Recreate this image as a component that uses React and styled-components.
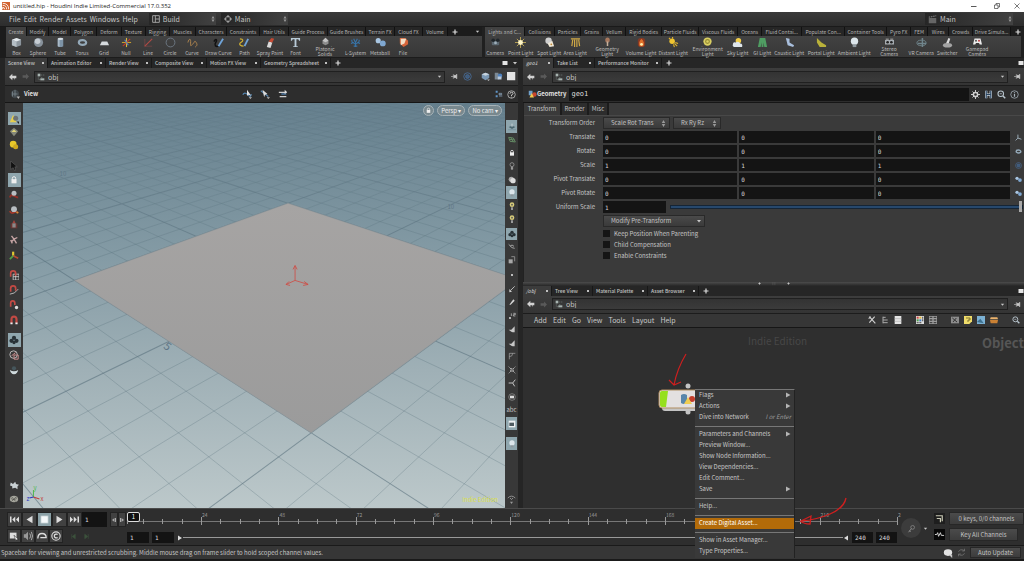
import React, { useState } from "react";
import styled, { createGlobalStyle } from "styled-components";

const GlobalStyle = createGlobalStyle`
  * { box-sizing: border-box; }
  body {
    margin: 0;
    background: #2f2f2f;
    overflow: hidden;
  }
  body, button, input, select {
    font-family: "Noto Sans CJK SC", "Noto Sans", sans-serif;
    font-size: 6px;
    line-height: 8px;
    color: #c4c4c4;
  }
  button, input, select {
    border: 0;
    border-radius: 0;
    padding: 0;
    margin: 0;
    outline: 0;
    background: none;
    appearance: none;
  }
`;

// Icons, all drawn on a 12 x 12 box
const icons = {
  box: <g><path d="M1 3l5-2 5 2v6l-5 2-5-2z" fill="#8b949c" /><path d="M1 3l5-2 5 2-5 2z" fill="#e3e8ec" /><path d="M1 3l5 2v6l-5-2z" fill="#b4bdc4" /></g>,
  sphere: <g><circle cx="6" cy="6" r="5" fill="#87919a" /><circle cx="5" cy="4.500" r="3" fill="#c6cdd3" /></g>,
  tube: <g><path d="M3 2v8q3 2 6 0V2z" fill="#7d93a6" /><path d="M3 2v8l2 1V2z" fill="#a9b9c6" /><ellipse cx="6" cy="2" rx="3" ry="1.300" fill="#d5dde3" /></g>,
  torus: <ellipse cx="6" cy="6" rx="4" ry="2.500" fill="none" stroke="#94a9b8" strokeWidth="2.400" />,
  plane: <path d="M3 5h6l2 4H1z" fill="#d6dadd" />,
  null: <g fill="none" strokeWidth="1.200"><path d="M1 6h10" stroke="#c39a2c" /><path d="M6 1v10" stroke="#d9b53a" /><path d="M2 10l8-8" stroke="#c0392b" /><path d="M4 3l4 6" stroke="#4f86c6" /></g>,
  line: <g fill="none"><path d="M2 11V2M2 10h8" stroke="#6d4545" /><path d="M2 10l8-8" stroke="#b04a44" strokeWidth="1.200" /></g>,
  circle: <circle cx="6" cy="6" r="4.800" fill="none" stroke="#6f7a86" />,
  curve: <path d="M1 6c1-4 3-5 3-1s-1 6 2 3 2-5 4-2 0 4-1 5" fill="none" stroke="#b88a4f" />,
  draw: <g fill="none"><path d="M1 5c2-4 4-2 2 1s0 5 3 4" stroke="#111" strokeWidth="1.600" /><path d="M6 10l5-8" stroke="#6fa3d8" strokeWidth="2" /></g>,
  path: <g fill="none"><path d="M1 2c4 0 4 2 1 4s0 4 3 4" stroke="#d0b032" strokeWidth="1.300" /><path d="M6 10l4-8" stroke="#6fa3d8" strokeWidth="2" /></g>,
  spray: <g><path d="M2 11l2-6 4 1-2 6z" fill="#d9d9d9" /><path d="M4 5l3-4 3 1-2 4z" fill="#c44a34" /></g>,
  font: <path d="M1 1h10v3h-1L9 2.500H7V10h1.500v1h-5v-1H5V2.500H3L2 4H1z" fill="#b9cbd8" />,
  platonic: <g><path d="M2 5l4-4 4 4v4l-4 2-4-2z" fill="#8d8d8d" /><path d="M2 5l4 2 4-2-4-4z" fill="#c4c4c4" /></g>,
  lsystem: <path d="M6 11V6M6 8L2 5M6 8l4-3M4 6L1 7M8 6l3 1M6 6L4 2M6 6l2-4M2 5V3M10 5V3M4 10h4" fill="none" stroke="#3773a8" strokeWidth="1.200" />,
  metaball: <g><circle cx="3.500" cy="4" r="2.800" fill="#a9c6e2" /><circle cx="8.500" cy="7" r="3.200" fill="#7fa8d2" /></g>,
  file: <g><path d="M2 1h6l3 3v4l-5 3-4-4z" fill="#d5643a" /><path d="M3 2h6l-2 5-4 2z" fill="#f1dfc8" /></g>,
  camera: <g><rect x="2" y="4" width="8" height="5" rx="1" fill="#5b6770" /><circle cx="3.500" cy="3.500" r="2" fill="#20262a" /><circle cx="8.500" cy="3.500" r="2" fill="#20262a" /><circle cx="6" cy="6.500" r="1.500" fill="#9fb0bb" /></g>,
  point: <g><path d="M6 0v12M0 6h12M2 2l8 8M10 2l-8 8" stroke="#d9bf5a" strokeWidth=".8" /><circle cx="6" cy="6" r="2.700" fill="#fff6c9" /></g>,
  spot: <g><circle cx="5" cy="4" r="3.500" fill="#cfcfcf" /><path d="M4 7l5-3 2 6-5 1z" fill="#efe8d8" /><circle cx="8" cy="8" r="1" fill="#c08733" /></g>,
  area: <path d="M1 2h10M3 3L2 10M5 3v8M7.500 3v8M9.500 3l1 7" stroke="#cfa846" strokeWidth="1.300" fill="none" />,
  geolight: <g><ellipse cx="6" cy="4" rx="3" ry="3.500" fill="#a6785e" /><path d="M5 6h2v6H5z" fill="#c7b09c" /></g>,
  volume: <g><rect x="2" y="1" width="8" height="10" rx="3" fill="#843824" /><path d="M6 2q4 4 2 8H4Q2 6 6 2z" fill="#e0702a" /><circle cx="6" cy="8" r="1.500" fill="#fff0b0" /></g>,
  distant: <g><circle cx="4.500" cy="4.500" r="3" fill="#f0c531" /><path d="M6 8l1 3M8 6l3 1M7 7l3 3M1 1l2 2M5 0v2" stroke="#e2b52c" strokeWidth="1.200" /></g>,
  env: <g><circle cx="6" cy="6" r="5.500" fill="#d9cf62" /><circle cx="6" cy="6" r="2.500" fill="none" stroke="#948a35" strokeWidth="1.500" /></g>,
  sky: <g><circle cx="7" cy="4" r="3" fill="#f0cc4a" /><path d="M1 8q0-3 3-2 3-2 5 1 3 0 2 4H2q-2-1-1-3z" fill="#dfe6ec" /></g>,
  gi: <path d="M3 1h6l2 10H8L7 6v5H5V6l-1 5H1z" fill="#4f9d62" />,
  caustic: <path d="M2 1l4 1v4l5 3-1 2-6-2-1-4z" fill="#a9bfdd" />,
  portal: <path d="M1 1l5 5 5 3v2H4L1 6z" fill="#b9b13a" />,
  bulb: <g><circle cx="6" cy="4.500" r="4" fill="#dce5ea" /><path d="M4 8h4v3H4z" fill="#8d979d" /></g>,
  stereo: <g><rect x="0" y="4" width="12" height="6" fill="#a7adb2" /><path d="M1 2h4v2H1zM7 2h4v2H7z" fill="#888" /><circle cx="3.500" cy="7" r="1.800" fill="#222" /><circle cx="8.500" cy="7" r="1.800" fill="#222" /></g>,
  vr: <g fill="none" stroke="#70858c"><ellipse cx="6" cy="6.500" rx="5" ry="3" /><path d="M7 1v10M2 7h9" strokeWidth="1.600" /></g>,
  switcher: <g><path d="M4 8l3-7 2 1-2 6z" fill="#dcdcdc" /><ellipse cx="6" cy="9" rx="5" ry="2.500" fill="#a3a3a3" /></g>,
  gamepad: <g><path d="M2 2h8l2 8H9L8 8H4l-1 2H0z" fill="#ececec" /><circle cx="4" cy="5" r="1.200" fill="#444" /><circle cx="8" cy="5" r="1.200" fill="#b33" /></g>,
  back: <path d="M0 6l5-5v3h6v4H9L8 11 8 8H5v3z" fill="#d2d2d2" />,
  forward: <path d="M12 6L7 1v3H1v4h6v3z" fill="#5a5a5a" />,
  network: <g><path d="M1 1h4v4H1z" fill="#a7b3b0" /><path d="M2 5v5h3M6 3h5M6 7h3" stroke="#6f7c79" fill="none" strokeDasharray="2 1" /><path d="M5 8h6v3H5z" fill="#a7b3b0" /></g>,
  pin: <path d="M0 6h4M4 2v8M5 4h3l2-2v8L8 8H5z" stroke="#c8c8c8" fill="#c8c8c8" />,
  target: <g fill="none" stroke="#476992" strokeWidth="1.200"><circle cx="6" cy="6" r="5" /><circle cx="6" cy="6" r="2.500" fill="#3e5b7c" /></g>,
  cubes: <g><path d="M1 3l5-2 5 2v5l-5 3-5-3z" fill="#7b98b4" /><path d="M1 3l5-2 5 2-5 2z" fill="#c7d3dd" /><path d="M8 10h4l-2 2z" fill="#bbb" /></g>,
  shapes: <g><path d="M1 1h5v9H1z" fill="#7c8994" /><circle cx="8" cy="5" r="3" fill="#4f82c0" /><path d="M5 6h5v4H5z" fill="#b8c8da" /></g>,
  white: <path d="M0 0h11v11H0z" fill="#e4e4e4" />,
  square: <path d="M1 2h10v8H1z" fill="#e4e4e4" />,
  down: <path d="M2 4h8l-4 5z" fill="#c8c8c8" />,
  right: <path d="M2 1l9 5-9 5z" fill="#b4b4b4" />,
  plus: <path d="M6 1v10M1 6h10" stroke="#dcdcdc" strokeWidth="2.400" />,
  updown: <path d="M6 0l3 5H3zM6 12L3 7h6z" fill="#999" />,
  grip: <path d="M0 2h12M0 5h12M0 8h12" stroke="#7a7a7a" strokeDasharray="1 1" />,
  view: <g><circle cx="6" cy="6" r="5" fill="#3f4549" /><path d="M6 1v8M3 3v6M3 6h6" stroke="#7a868c" /><path d="M8 9h4l-2 3z" fill="#bbb" /></g>,
  selectTool: <g><path d="M1 7q2-4 6 0t4-1" fill="none" stroke="#5483ad" strokeWidth="1.500" /><path d="M6 1v7l2-1 3 1z" fill="#e5e5e5" /><path d="M8 10h4l-2 2z" fill="#bbb" /></g>,
  moveTool: <g><path d="M1 2l5 4 4 3" stroke="#5b88b1" strokeWidth="1.500" /><path d="M3 1l6 5-3 1-1 3z" fill="#ddd" /><path d="M8 10h4l-2 2z" fill="#bbb" /></g>,
  snapTool: <g fill="none"><path d="M1 4h9M2 9h8" stroke="#cfcfcf" strokeWidth="1.500" /><path d="M4 6h6" stroke="#4f82b5" strokeWidth="1.500" /><path d="M8 1l3 3-3 2" fill="#ddd" /></g>,
  tree: <g><path d="M1 1h3v3H1zM1 8h3v3H1z" fill="#5f94c7" /><path d="M6 5h4v2H6zM6 9h5" stroke="#9bb7d0" fill="none" /></g>,
  help: <g fill="none" stroke="#c9c9c9"><circle cx="6" cy="6" r="5" /><path d="M4 5q0-2 2-2t2 1.500-2 2V8M6 9v1" strokeWidth="1.300" /></g>,
  info: <g fill="none" stroke="#a8b4bd"><circle cx="6" cy="6" r="5" /><path d="M6 5v4M6 2.500v1.300" strokeWidth="1.600" /></g>,
  lock: <g><path d="M4 6V4q0-2 2-2t2 2v2" fill="none" stroke="#eee" strokeWidth="1.200" /><path d="M3 5h6v5H3z" fill="#eee" /></g>,
  gear: <g fill="none" stroke="#cfcfcf"><circle cx="6" cy="6" r="2.800" strokeWidth="2" /><path d="M6 0v3M6 9v3M0 6h3M9 6h3M2 2l2 2M8 8l2 2M10 2L8 4M4 8l-2 2" strokeWidth="1.300" /></g>,
  houdini: <g fill="none"><path d="M3 1v10M9 1v10M3 6h6" stroke="#cdd8e2" strokeWidth="3" /><path d="M3 1v10M9 1v10M3 6h6" stroke="#2c4763" strokeWidth="1.500" /></g>,
  search: <g fill="none" stroke="#b9c6cf"><circle cx="5" cy="5" r="3.700" strokeWidth="1.400" /><path d="M8 8l3 3" strokeWidth="2" /><path d="M3.500 5h3" /></g>,
  geo: <g><path d="M1 1h5v6H1z" fill="#6f9fc8" /><circle cx="8.500" cy="6" r="3" fill="#c8452c" /><path d="M5 4l3 6H2z" fill="#f0c850" /></g>,
  cone: <g><path d="M5 1l4 9H1z" fill="#e7cf4d" /><circle cx="8" cy="5" r="3" fill="#6d7275" /><path d="M9 9h3v3z" fill="#222" /></g>,
  prims: <g><path d="M6 1l5 4-5 6-5-6z" fill="#85887a" /><path d="M6 3l3 3H3z" fill="#e4d678" /></g>,
  ball: <g><circle cx="5" cy="5" r="4" fill="#e7c72a" /><circle cx="8" cy="8" r="3" fill="#cda71f" /></g>,
  arrow: <path d="M2 0v10l3-2 2 4 1-1-1-4h3z" fill="#111" stroke="#777" strokeWidth=".5" />,
  rotate: <g><path d="M1 9q1-4 5-2t5 2" fill="none" stroke="#932f26" strokeWidth="2.200" /><circle cx="6" cy="4" r="3" fill="#b9bec2" /></g>,
  orbit: <g><path d="M1 7q1 4 5 2t5 1" fill="none" stroke="#a8392a" strokeWidth="1.800" /><circle cx="6" cy="5" r="3.500" fill="#b9bec2" /><circle cx="10" cy="9" r="1.300" fill="#d8903a" /></g>,
  scaleT: <g><path d="M2 4h8v6H2z" fill="#6b3532" /><path d="M6 0l2 4H4z" fill="#a5433b" /><path d="M4 4h4v5H4z" fill="#8a8a8a" /></g>,
  pose: <path d="M3 1l3 4 4-2M6 5l-3 3M6 5l3 5M2 6l2 4" stroke="#c8a6a6" strokeWidth="1.600" fill="none" />,
  axes: <g><path d="M5 7V2" stroke="#e2c931" strokeWidth="2.600" /><path d="M5 7l6 3" stroke="#b94a32" strokeWidth="2" /><path d="M5 7l-4 4" stroke="#54a047" strokeWidth="2" /></g>,
  magnet: <g><path d="M3 10V5q0-3 3-3t3 3v5" fill="none" stroke="#c24a44" strokeWidth="2.600" /><path d="M1.700 9h2.600v2H1.700zM7.700 9h2.600v2H7.700z" fill="#eee" /></g>,
  magnetGrid: <g><path d="M5 5h7v7H5zM8 5v7M5 8h7" fill="none" stroke="#ccc" /><path d="M2 8V4q0-3 3-3t3 3v3" fill="none" stroke="#c24a44" strokeWidth="2" /></g>,
  magnetCurve: <g><path d="M1 11q6 0 10-6" fill="none" stroke="#ccc" /><path d="M2 8V4q0-3 3-3t3 3v3" fill="none" stroke="#c24a44" strokeWidth="2" /></g>,
  magnetDot: <g><circle cx="9" cy="9" r="2" fill="#ddd" /><path d="M2 8V4q0-3 2.500-3t2.500 3v2" fill="none" stroke="#c24a44" strokeWidth="2" /></g>,
  rose: <g fill="#283237"><circle cx="6" cy="3.500" r="2.500" /><circle cx="3" cy="7" r="2.500" /><circle cx="9" cy="7" r="2.500" /><circle cx="6" cy="9" r="2" /></g>,
  record: <g fill="none"><circle cx="5.500" cy="5.500" r="4.500" stroke="#ccc" /><path d="M3 7l5-4M6 6h5v5H6z" stroke="#c98d8d" strokeWidth="1.200" /></g>,
  bowl: <g><path d="M1 6q5 3 10 0-1 5-5 5T1 6z" fill="#cfdadd" /><circle cx="6" cy="4" r="2.500" fill="#46565c" /></g>,
  cloud: <path d="M1 2l3 2 3-3 1 3 4 1-2 2v4L7 9l-4 1V7L0 6z" fill="#c9d0d3" />,
  knot: <g><ellipse cx="6" cy="6" rx="5" ry="4" fill="#a5a59c" /><path d="M2 5q4 4 8-1M3 9l6-6M3 3l5 6" fill="none" stroke="#484844" strokeWidth=".7" /></g>,
  ground: <g><path d="M1 6l5-2 5 2-5 3z" fill="#4a6670" /><path d="M6 1v5" stroke="#e4eaec" /><path d="M0 9h12v2H0z" fill="#7d98a2" /></g>,
  greenMesh: <path d="M1 2l7 1 3 6-8-1zM4 2l4 7M2 5l8 1" fill="none" stroke="#689268" strokeWidth="1.300" />,
  lamp: <g fill="none" stroke="#aaa"><circle cx="6" cy="4" r="3" /><path d="M5 8h2v3H5z" fill="#aaa" /></g>,
  lampY: <g><circle cx="6" cy="4" r="3.500" fill="#d8cc7a" /><circle cx="6" cy="4" r="1.300" fill="#555" /><path d="M5 8h2v4H5z" fill="#ccc" /></g>,
  moon: <g><circle cx="5" cy="5" r="4" fill="#aaa" /><circle cx="7.500" cy="7" r="4" fill="#ddd" /></g>,
  cycle: <g fill="none" stroke="#aaa"><path d="M1 2l5 5 4 1M3 5q3-4 6 0" strokeWidth="1.400" /></g>,
  snap: <g><path d="M1 5h6v6H1z" fill="#a8a8a8" /><path d="M5 1h5v7" fill="none" stroke="#888" strokeWidth="1.500" /></g>,
  dot: <circle cx="6" cy="6" r="1.500" fill="#e8e8e8" />,
  check: <g><path d="M4 8l6-6" fill="none" stroke="#ccc" strokeWidth="1.300" /><path d="M2 6l4 4-4 1z" fill="#ccc" /></g>,
  pen: <path d="M2 10l6-8 2 2-6 6z" fill="#d6d6d6" />,
  num: <g><circle cx="3" cy="9" r="1.500" fill="#ddd" /><path d="M5 2v4M8 2h3v2H8v2h3" stroke="#ccc" fill="none" /></g>,
  spike: <path d="M1 7h4l5-5v9H7l-2-1z" fill="#c8c8c8" />,
  angle: <path d="M2 11V2h9M2 7q5 0 5-5" fill="none" stroke="#aaa" />,
  expand: <path d="M1 1l10 10M11 1L1 11M4 4h4v4H4z" fill="none" stroke="#bbb" strokeWidth="1.300" strokeDasharray="2 1" />,
  tri: <path d="M7 6l4-5M7 6l3 5M7 6H1" fill="none" stroke="#ccc" strokeWidth="1.400" />,
  tripod: <path d="M5 7V1M5 7l-4 4M5 7l6 2" fill="none" stroke="#9fb0bb" strokeWidth="1.600" />,
  disc: <g><circle cx="6" cy="6" r="5" fill="none" stroke="#999" /><path d="M3 4h6v4H3z" fill="#ddd" /></g>,
  image: <g><path d="M1 1h10v10H1z" fill="#eef1f2" /><path d="M2 4h7v5H2z" fill="#4e5b61" /></g>,
  eye: <g><path d="M1 4q5-5 10 0M4 4l2 2 2-2" fill="none" stroke="#aaa" /><path d="M4 9h4l-2 3z" fill="#999" /></g>,
  tools: <path d="M2 1l9 10M10 1L2 10M1 4l3-3" stroke="#d0d0d0" strokeWidth="1.700" fill="none" />,
  list: <path d="M3 1v10M3 2h4M3 6h7M3 10h7" stroke="#a8a8a8" strokeWidth="1.500" fill="none" />,
  sheet: <g><path d="M1 0h10v12H1z" fill="#e4e4e4" /><path d="M1 4h10M1 8h10" stroke="#b0b0b0" /></g>,
  palette: <g><path d="M0 0h12v12H0z" fill="#ddd" /><path d="M1 1h3v3H1z" fill="#c44" /><path d="M5 1h3v3H5z" fill="#e2b53a" /><path d="M1 5h3v3H1z" fill="#4b9a4b" /><path d="M5 5h3v3H5z" fill="#447cc2" /><path d="M9 1h2v3H9zM9 5h2v3H9zM1 9h3v2H1zM5 9h3v2H5z" fill="#666" /></g>,
  table: <g><path d="M0 0h12v12H0z" fill="#9c9c9c" /><path d="M1 1h4v2H1zM7 1h4v2H7zM1 5h4v2H1zM7 5h4v2H7zM1 9h4v2H1zM7 9h4v2H7z" fill="#444" /></g>,
  picture: <g><path d="M0 1h12v10H0z" fill="#8c8c8c" /><path d="M2 3l7 6M8 3L3 9" stroke="#333" strokeWidth="1.500" /></g>,
  note: <g><path d="M0 0h12v8l-4 4H0z" fill="#efdc6a" /><path d="M3 3h6v3H6v3" stroke="#6b6128" fill="none" strokeWidth="1.300" /></g>,
  photo: <g><path d="M0 0h12v12H0z" fill="#7bb1d4" /><path d="M0 9l5-5 5 7z" fill="#3c6f8e" /></g>,
  chest: <g><path d="M1 2h10l1 3H0z" fill="#eab26c" /><path d="M0 6h12l-1 5H1z" fill="#ca8134" /></g>,
  first: <path d="M0 2h2v8H0zM7 2v8L3 6zM12 2v8L8 6z" fill="#ddd" />,
  prev: <path d="M10 1v10L2 6z" fill="#ddd" />,
  stop: <path d="M1 1h10v10H1z" fill="#f4f8f9" stroke="#9fb0b5" />,
  play: <path d="M2 1v10l8-5z" fill="#ddd" />,
  last: <path d="M0 2v8l4-4zM5 2v8l4-4zM10 2h2v8h-2z" fill="#ddd" />,
  stepBack: <path d="M7 2v8L2 6zM8 2h2v8H8z" fill="#aaa" />,
  stepFwd: <path d="M5 2v8l5-4zM2 2h2v8H2z" fill="#aaa" />,
  keySet: <g><path d="M1 2h8v7H1z" fill="#ddd" /><path d="M6 5l5 5-3 1z" fill="#fff" stroke="#222" strokeWidth=".6" /></g>,
  sound: <g fill="none"><path d="M1 4h2l3-3v10L3 8H1z" fill="#999" /><path d="M8 3q3 3 0 6M10 1q3 5 0 10" stroke="#bbb" /></g>,
  loop: <path d="M1 9q0-6 5-6t5 5H4" fill="none" stroke="#ddd" strokeWidth="1.600" />,
  clock: <g fill="none" stroke="#ddd"><circle cx="6" cy="6" r="5" strokeWidth="1.300" /><path d="M8 4q-4-1-4 2t4 2" strokeWidth="1.500" /></g>,
  dimPrev: <path d="M3 2v8M9 2v8L4 6z" stroke="#3d523d" fill="#3d523d" />,
  dimNext: <path d="M9 2v8M3 2v8l5-4z" stroke="#3d523d" fill="#3d523d" />,
  key: <g fill="none" stroke="#8a8a8a"><circle cx="7.500" cy="4.500" r="2.500" /><path d="M6 6l-4 5M3 9l2 1" strokeWidth="1.300" /></g>,
  scope: <g><path d="M0 0h12v12H0z" fill="#1e1e1e" /><path d="M2 3h7v6M3 6h4v4" fill="none" stroke="#c9c9b4" strokeWidth="1.300" /></g>,
  wave: <g><path d="M0 0h12v12H0z" fill="#080808" /><path d="M1 6h2l1-2 1 4 2-4 1 3h3" fill="none" stroke="#ddd" /></g>,
  chat: <g><ellipse cx="6" cy="5.500" rx="5" ry="4" fill="#e3e3e3" /><path d="M7 8h4v4z" fill="#c8c8c8" /></g>,
  refresh: <path d="M2 5q2-4 7-2l1 1M10 7q-2 4-7 2L2 8M10 1v3H7M2 11V8h3" fill="none" stroke="#777" />,
  clap: <g><path d="M1 4h10v7H1z" fill="#666" /><path d="M1 3l10-2" stroke="#777" strokeWidth="1.600" strokeDasharray="2 1" /></g>,
  layout: <path d="M1 1h10v10H1zM5 1v10M5 6h6" fill="none" stroke="#bbb" strokeWidth="1.200" />,
  cross: <g fill="none" stroke="#bbb"><circle cx="6" cy="6" r="4" /><path d="M6 0v4M6 8v4M0 6h4M8 6h4" strokeWidth="1.300" /></g>,
  logo: <g><path d="M0 0h12v12H0z" fill="#d2622f" /><path d="M1 11V8q3 0 3 3M1 5q6 0 6 6M1 2q9 0 9 9" fill="none" stroke="#fff" strokeWidth="1.300" /></g>,
  min: <path d="M0 7h11" stroke="#222" strokeWidth="1.500" />,
  max: <path d="M1 4h7v7H1zM4 4V1h7v7H8" fill="none" stroke="#222" strokeWidth="1.200" />,
  close: <path d="M1 1l10 10M11 1L1 11" stroke="#222" strokeWidth="1.200" />,
};

const Svg = styled.svg`
  display: block;
  flex: none;
  width: ${(p) => p.$size}px;
  height: ${(p) => p.$size}px;
`;

const Icon = ({ name, size = 8 }) => (
  <Svg $size={size} viewBox="0 0 12 12" aria-hidden="true">
    {icons[name]}
  </Svg>
);

const Page = styled.div`
  display: flex;
  flex-direction: column;
  height: 100vh;
  overflow: hidden;
  background: #2b2b2b;
`;

const Row = styled.div`
  display: flex;
  align-items: center;
  gap: ${(p) => p.$gap || 0}px;
`;

const Spacer = styled.div`
  flex: ${(p) => (p.$w ? `0 0 ${p.$w}px` : "1")};
`;

const IconButton = styled.button`
  display: grid;
  place-items: center;
  flex: none;
  width: ${(p) => p.$w || 13}px;
  height: ${(p) => p.$h || 12}px;
  background: ${(p) => (p.$on ? "#8fa6ae" : "none")};
`;

// Window chrome
const TitleBar = styled.header`
  display: flex;
  align-items: center;
  flex: none;
  gap: 3px;
  height: 12px;
  padding: 0 0 0 2px;
  background: #fff;
  color: #222;
  font-family: "Open Sans", sans-serif;
`;

const MenuBar = styled.nav`
  display: flex;
  align-items: center;
  flex: none;
  height: 15px;
  padding-left: 9px;
  background: linear-gradient(#3a3a3a, #2d2d2d);
  border-bottom: 1px solid #1a1a1a;
`;

const MenuItem = styled.button`
  margin-right: ${(p) => p.$gap || 3}px;
  font-size: 7px;
  color: #c8c8c8;
`;

const Chooser = styled.label`
  display: flex;
  align-items: center;
  gap: 3px;
  width: ${(p) => p.$w}px;
  height: 12px;
  padding-left: 3px;
  background: linear-gradient(90deg, #262626, #414141);
`;

const ChooserSelect = styled.select`
  flex: 1;
  min-width: 0;
  font-size: 7px;
`;

// Shelves
const Shelves = styled.div`
  display: flex;
  flex: none;
  height: 31px;
  padding-left: 6px;
  background: #1c1c1c;
`;

const Shelf = styled.section`
  flex: ${(p) => p.$grow} 1 0;
  min-width: 0;
  overflow: hidden;
  border-right: 3px solid #202020;
`;

const ShelfTabs = styled.div`
  display: flex;
  align-items: stretch;
  height: 9px;
`;

const ShelfTab = styled.button`
  flex: none;
  width: ${(p) => p.$w}px;
  font-size: 5px;
  line-height: 9px;
  white-space: nowrap;
  color: #b4b4b4;
  background: ${(p) => (p.$active ? "#414141" : "#262626")};
  border-right: 1px solid #111;
`;

const ShelfTools = styled.div`
  display: flex;
  height: 21px;
  background: linear-gradient(#424242, #373737);
`;

const Tool = styled.button`
  display: flex;
  flex-direction: column;
  align-items: center;
  flex: none;
  gap: ${(p) => (p.$tall ? 0 : 1)}px;
  width: ${(p) => p.$w}px;
  padding-top: 1px;
  font-size: 5px;
  line-height: ${(p) => (p.$tall ? 5 : 7)}px;
  white-space: nowrap;
  color: #bdbdbd;
`;

// Panes
const Desktop = styled.main`
  display: grid;
  grid-template-columns: minmax(0, 513fr) minmax(0, 501fr);
  grid-template-rows: minmax(0, 1fr);
  gap: 5px;
  flex: 1;
  min-height: 0;
  padding-left: 5px;
  background: #252525;
`;

const Pane = styled.section`
  display: flex;
  flex-direction: column;
  min-width: 0;
  min-height: 0;
  flex: ${(p) => p.$flex || "none"};
`;

const RightColumn = styled.div`
  display: flex;
  flex-direction: column;
  min-height: 0;
  min-width: 0;
`;

const PaneTabs = styled.div`
  display: flex;
  align-items: stretch;
  flex: none;
  height: 10px;
  background: #262626;
`;

const PaneTab = styled.button`
  display: flex;
  align-items: center;
  justify-content: space-between;
  width: ${(p) => p.$w}px;
  padding: 0 3px;
  font-size: 5px;
  font-weight: 500;
  font-style: ${(p) => (p.$italic ? "italic" : "normal")};
  white-space: nowrap;
  color: #c0c0c0;
  background: ${(p) => (p.$active ? "#3c3c3c" : "#262626")};
  border-right: 1px solid #181818;

  &::after {
    content: "";
    width: 2px;
    height: 2px;
    background: #c0c0c0;
  }
`;

const PathBar = styled.div`
  display: flex;
  align-items: center;
  flex: none;
  height: 18px;
  padding-left: 2px;
  background: linear-gradient(#3d3d3d, #343434);
  border-bottom: 1px solid #1c1c1c;
`;

const PathField = styled.label`
  display: flex;
  align-items: center;
  gap: 3px;
  flex: 1;
  height: 12px;
  margin: 0 3px;
  padding-left: 2px;
  background: linear-gradient(#333, #3b3b3b);
  border: 1px solid #202020;

  input {
    flex: 1;
    min-width: 0;
    font-size: 7px;
  }
`;

const ToolStrip = styled.div`
  display: flex;
  align-items: center;
  flex: none;
  height: ${(p) => p.$h || 17}px;
  padding: 0 0 0 5px;
  background: ${(p) => p.$bg || "#2d2d2d"};
  border-bottom: 1px solid #161616;
`;

const Strong = styled.span`
  font-weight: 700;
  color: #e0e0e0;
`;

// 3D view
const ViewBody = styled.div`
  display: flex;
  flex: 1;
  min-height: 0;
`;

const SideBar = styled.div`
  display: flex;
  flex-direction: column;
  align-items: center;
  flex: none;
  width: ${(p) => p.$w}px;
  padding: ${(p) => p.$top}px 0 3px;
  overflow: hidden;
  background: #383838;
`;

const Stage = styled.div`
  position: relative;
  flex: 1;
  min-width: 0;
  background: linear-gradient(#66808e, #849ba5 38%, #9fb0b6 66%, #bcc8ca);

  > svg {
    position: absolute;
    inset: 0;
    width: 100%;
    height: 100%;
  }
`;

const StageControls = styled.div`
  position: absolute;
  top: 2px;
  right: 3px;
  display: flex;
  gap: 3px;
`;

const Pill = styled.button`
  display: grid;
  place-items: center;
  min-width: 11px;
  height: 11px;
  padding: 0 ${(p) => (p.$round ? 0 : 3)}px;
  border: 1px solid #a7b2b7;
  border-radius: 6px;
  background: #78888e;
  color: #eee;
`;

const StageMark = styled.span`
  position: absolute;
  right: 7px;
  bottom: 4px;
  color: #dbe04a;
`;

// Parameter editor
const NameInput = styled.input`
  flex: 1;
  height: 13px;
  padding-left: 2px;
  margin: 0 0 0 3px;
  background: #141414;
  color: #ddd;
  font-family: "DejaVu Sans Mono", monospace;
  font-size: 7px;
`;

const Params = styled.div`
  flex: 1;
  background: #3a3a3a;
  border-left: 1px solid #222;
`;

const ParamTabs = styled.div`
  display: flex;
  height: 13px;
  border-bottom: 1px solid #484848;
`;

const ParamTab = styled.button`
  width: ${(p) => p.$w}px;
  height: 12px;
  background: ${(p) => (p.$active ? "#3a3a3a" : "#2d2d2d")};
  border-right: 2px solid #1c1c1c;
`;

const ParamRow = styled.div`
  display: grid;
  grid-template-columns: 71px minmax(0, 1fr);
  column-gap: 8px;
  align-items: center;
  height: ${(p) => p.$h || 14}px;
`;

const ParamLabel = styled.span`
  text-align: right;
`;

const Vector = styled.div`
  display: grid;
  grid-template-columns: repeat(3, minmax(0, 1fr)) 12px;
  align-items: center;
  column-gap: 2px;
`;

const NumberInput = styled.input`
  width: ${(p) => (p.$w ? `${p.$w}px` : "100%")};
  height: 12px;
  padding: 0 2px;
  background: #141414;
  color: #d4d4d4;
  font-family: "DejaVu Sans Mono", monospace;
`;

const Combo = styled.span`
  display: flex;
  align-items: center;
  width: ${(p) => p.$w}px;
  height: 12px;
  padding: 0 2px 0 7px;
  background: linear-gradient(#4a4a4a, #3a3a3a);
  border: 1px solid #292929;

  select {
    flex: 1;
    min-width: 0;
  }
`;

const ScaleSlider = styled.input`
  flex: 1;
  height: 11px;
  margin: 0 1px 0 4px;

  &::-webkit-slider-runnable-track {
    height: 4px;
    background: #27486c;
    border: 1px solid #152536;
  }
  &::-webkit-slider-thumb {
    appearance: none;
    width: 3px;
    height: 11px;
    margin-top: -5px;
    background: #aaa;
  }
`;

const CheckLabel = styled.label`
  display: flex;
  align-items: center;
  gap: 4px;

  input {
    width: 7px;
    height: 7px;
    background: #151515;
  }
  input:checked {
    background: #c8c8c8;
  }
`;

const Splitter = styled.div`
  display: flex;
  align-items: center;
  justify-content: center;
  gap: 11px;
  flex: none;
  height: 4px;
  background: linear-gradient(#4c4c4c, #262626);
`;

// Network editor
const Network = styled.div`
  position: relative;
  flex: 1;
  min-height: 0;
  background: #2f2f2f;
`;

const Watermark = styled.span`
  position: absolute;
  top: 6px;
  left: 225px;
  font-size: 10px;
  line-height: 13px;
  color: #474747;
`;

const ContextName = styled.span`
  position: absolute;
  top: 7px;
  right: 0;
  font-size: 13px;
  line-height: 16px;
  font-weight: 700;
  color: #565656;
`;

const NodeDrawing = styled.svg`
  position: absolute;
  left: 121px;
  top: 19px;
`;

const Menu = styled.div`
  position: absolute;
  z-index: 5;
  left: 172px;
  top: 61px;
  width: 100px;
  padding: 0 0 1px;
  background: #393939;
  border-top: 1px solid #777;
  border-right: 1px solid #222;
`;

const MenuRow = styled.button`
  display: flex;
  align-items: center;
  justify-content: space-between;
  width: 100%;
  height: 11px;
  padding: 0 3px 0 4px;
  background: ${(p) => (p.$hot ? "#b36b09" : "none")};
  color: ${(p) => (p.$hot ? "#fff" : "#c8c8c8")};

  i {
    color: #999;
  }
`;

const MenuRule = styled.hr`
  height: 1px;
  margin: 3px 0 2px;
  border: 0;
  background: #777;
`;

const HandArrow = styled.svg`
  position: absolute;
  z-index: 6;
  left: 273px;
  top: 164px;
`;

// Playbar
const PlayBar = styled.section`
  display: flex;
  flex: none;
  height: 38px;
  padding: 3px 0 1px 7px;
  border-top: 1px solid #4a4a4a;
  border-bottom: 1px solid #1a1a1a;
  background: #2e2e2e;
`;

const PlayColumn = styled.div`
  display: flex;
  flex-direction: column;
  gap: ${(p) => p.$gap || 2}px;
  width: ${(p) => (p.$w ? `${p.$w}px` : "auto")};
  flex: ${(p) => (p.$w ? "none" : 1)};
  min-width: 0;
`;

const PlayButton = styled(IconButton)`
  width: ${(p) => p.$w || 14}px;
  height: ${(p) => p.$h || 15}px;
  background: ${(p) => (p.$on ? "#8aa0a6" : "#414141")};
  border: 1px solid #232323;
`;

const FrameInput = styled.input`
  width: ${(p) => p.$w}px;
  height: ${(p) => p.$h || 11}px;
  padding: 0 3px;
  background: #131313;
  color: #ddd;
  font-family: "DejaVu Sans Mono", monospace;
  font-size: 6px;
`;

const Ruler = styled.div`
  display: flex;
  height: 18px;
  background: linear-gradient(transparent 9px, #777 9px, #777 10px, transparent 10px);
`;

const Tick = styled.div`
  flex: ${(p) => p.$frames} 1 0;
  min-width: 0;
  font-size: 5px;
  line-height: 5px;
  color: #999;

  &::after {
    content: "";
    display: block;
    width: 1px;
    height: ${(p) => (p.$major ? 8 : 5)}px;
    margin-top: ${(p) => (p.$major ? 0 : 2)}px;
    background: #999;
  }
`;

const TickLabel = styled.span`
  display: block;
  height: 5px;
  padding-left: 1px;
  white-space: nowrap;
`;

const FrameMarker = styled.output`
  position: absolute;
  width: 13px;
  height: 10px;
  border: 1px solid #ddd;
  border-radius: 2px;
  background: #111;
  color: #fff;
  text-align: center;
`;

const RangeTrack = styled.div`
  display: flex;
  align-items: center;
  flex: 1;

  span {
    flex: 1;
    height: 1px;
    background: #999;
  }
`;

const RoundKey = styled.button`
  display: grid;
  place-items: center;
  flex: none;
  width: 20px;
  height: 20px;
  border-radius: 50%;
  background: #3c3c3c;
`;

const WideButton = styled.button`
  flex: 1;
  height: ${(p) => p.$h || 13}px;
  padding: 0 ${(p) => p.$pad || 0}px;
  background: linear-gradient(#4b4b4b, #3c3c3c);
  border: 1px solid #272727;
  white-space: nowrap;
`;

const StatusBar = styled.footer`
  display: flex;
  align-items: center;
  flex: none;
  height: 15px;
  padding: 0 3px 0 1px;
  border-bottom: 2px solid #1a1a1a;
  background: #363636;
`;

const leftShelf = {
  tabs: [["Create", 21], ["Modify", 22], ["Model", 22], ["Polygon", 26], ["Deform", 25], ["Texture", 24], ["Rigging", 24], ["Muscles", 26], ["Characters", 31], ["Constraints", 33], ["Hair Utils", 29], ["Guide Process", 39], ["Guide Brushes", 38], ["Terrain FX", 29], ["Cloud FX", 28], ["Volume", 25]],
  tools: [["Box", "box", 21], ["Sphere", "sphere", 22], ["Tube", "tube", 22], ["Torus", "torus", 22], ["Grid", "plane", 22], ["Null", "null", 22], ["Line", "line", 22], ["Circle", "circle", 22], ["Curve", "curve", 22], ["Draw Curve", "draw", 31], ["Path", "path", 21], ["Spray Paint", "spray", 30], ["Font", "font", 21], ["Platonic|Solids", "platonic", 38], ["L-System", "lsystem", 23], ["Metaball", "metaball", 26], ["File", "file", 20]],
};

const rightShelf = {
  tabs: [["Lights and C...", 40], ["Collisions", 30], ["Particles", 26], ["Grains", 22], ["Vellum", 23], ["Rigid Bodies", 36], ["Particle Fluids", 37], ["Viscous Fluids", 39], ["Oceans", 24], ["Fluid Contai...", 40], ["Populate Con...", 43], ["Container Tools", 42], ["Pyro FX", 24], ["FEM", 17], ["Wires", 21], ["Crowds", 24], ["Drive Simula...", 38]],
  tools: [["Camera", "camera", 20], ["Point Light", "point", 31], ["Spot Light", "spot", 26], ["Area Light", "area", 26], ["Geometry|Light", "geolight", 38], ["Volume Light", "volume", 30], ["Distant Light", "distant", 34], ["Environment|Light", "env", 35], ["Sky Light", "sky", 25], ["GI Light", "gi", 24], ["Caustic Light", "caustic", 30], ["Portal Light", "portal", 34], ["Ambient Light", "bulb", 32], ["Stereo|Camera", "stereo", 38], ["VR Camera", "vr", 26], ["Switcher", "switcher", 26], ["Gamepad|Camera", "gamepad", 34]],
};

const ShelfSet = ({ shelf, grow }) => (
  <Shelf $grow={grow}>
    <ShelfTabs>
      {shelf.tabs.map(([name, w], i) => (
        <ShelfTab key={name} $w={w} $active={i === 0}>{name}</ShelfTab>
      ))}
      <IconButton $h={9} aria-label="Add shelf"><Icon name="plus" size={6} /></IconButton>
      <Spacer />
      <IconButton $h={9} $w={10} aria-label="Shelf menu"><Icon name="down" size={5} /></IconButton>
    </ShelfTabs>
    <ShelfTools>
      {shelf.tools.map(([name, icon, w]) => {
        const lines = name.split("|");
        return (
          <Tool key={name} $w={w} $tall={lines.length > 1}>
            <Icon name={icon} size={lines.length > 1 ? 9 : 11} />
            <span>{lines[0]}{lines[1] && <><br />{lines[1]}</>}</span>
          </Tool>
        );
      })}
    </ShelfTools>
  </Shelf>
);

const Tabs = ({ tabs, italic }) => (
  <PaneTabs>
    {tabs.map(([name, w], i) => (
      <PaneTab key={name} $w={w} $active={i === 0} $italic={italic && i === 0}>{name}</PaneTab>
    ))}
    <IconButton $h={10} aria-label="Add tab"><Icon name="plus" size={6} /></IconButton>
    <Spacer />
    <Row $gap={4}><Icon name="square" size={6} />{!italic && <Icon name="down" size={6} />}</Row>
  </PaneTabs>
);

const Path = ({ children }) => (
  <PathBar>
    <IconButton $w={12} aria-label="Back"><Icon name="back" /></IconButton>
    <IconButton $w={12} aria-label="Forward"><Icon name="forward" size={7} /></IconButton>
    <PathField>
      <Icon name="network" />
      <input defaultValue="obj" aria-label="Path" />
      <IconButton $w={10} $h={10} aria-label="Recent paths"><Icon name="down" size={5} /></IconButton>
    </PathField>
    <IconButton aria-label="Pin"><Icon name="pin" size={7} /></IconButton>
    {children}
  </PathBar>
);

// Ground plane corners on screen: far, right, near, left
const corners = [[288, 204], [518, 280], [311, 433], [75, 281]];

const makeProjection = ([[x0, y0], [x1, y1], [x2, y2], [x3, y3]]) => {
  const sx = x0 - x1 + x2 - x3;
  const sy = y0 - y1 + y2 - y3;
  const det = (x1 - x2) * (y3 - y2) - (x3 - x2) * (y1 - y2);
  const g = (sx * (y3 - y2) - (x3 - x2) * sy) / det;
  const h = ((x1 - x2) * sy - sx * (y1 - y2)) / det;
  return (u, v) => {
    const w = 1 + g * u + h * v;
    return [
      (x0 + (x1 - x0 + g * x1) * u + (x3 - x0 + h * x3) * v) / w,
      (y0 + (y1 - y0 + g * y1) * u + (y3 - y0 + h * y3) * v) / w,
    ];
  };
};

const project = makeProjection(corners);

const gridPath = (major) => {
  let d = "";
  for (let i = -50; i <= 25; i++) {
    if ((i % 5 === 0) !== major) continue;
    const k = i / 10;
    const end = 3.7 - k;
    [[project(k, -5), project(k, end)], [project(-5, k), project(end, k)]].forEach(([a, b]) => {
      d += `M${a[0].toFixed(1)} ${a[1].toFixed(1)}L${b[0].toFixed(1)} ${b[1].toFixed(1)}`;
    });
  }
  return d;
};

const Scene = () => (
  <svg viewBox="23 104 482 404" preserveAspectRatio="xMidYMid slice">
    <defs>
      <linearGradient id="haze" x1="0" y1="0" x2="0" y2="1">
        <stop offset="0" stopColor="#fff" stopOpacity=".4" />
        <stop offset=".4" stopColor="#fff" />
      </linearGradient>
      <mask id="far" maskUnits="userSpaceOnUse" x="23" y="104" width="482" height="404">
        <rect x="23" y="104" width="482" height="404" fill="url(#haze)" />
      </mask>
      <linearGradient id="ground" x1="0" y1="0" x2="0" y2="1">
        <stop offset="0" stopColor="#a6a4a3" />
        <stop offset="1" stopColor="#9b9b9b" />
      </linearGradient>
    </defs>
    <g mask="url(#far)" fill="none" stroke="#536b78">
      <path d={gridPath(false)} strokeWidth=".7" opacity=".4" />
      <path d={gridPath(true)} strokeWidth="1" opacity=".55" />
    </g>
    <polygon points={corners.map((c) => c.join(",")).join(" ")} fill="url(#ground)" stroke="#8d9498" strokeWidth=".5" />
    <g fill="#5f7686" fontSize="11">
      <text transform="translate(163 348) rotate(38)">5</text>
      <text transform="translate(58 177)" fontSize="6">-10</text>
      <text transform="translate(447 210)" fontSize="6">10</text>
    </g>
    <path d="M295 281V267M295 281l-9 4M295 281l13 4M293 270l2-4 2 4M289 282l-3 3 4 1M304 282l4 3-5 1" fill="none" stroke="#cf4a42" strokeWidth=".8" />
    <g fill="none">
      <path d="M34 497V490" stroke="#4db84d" />
      <path d="M34 497l6 2" stroke="#c23a3a" />
      <path d="M34 497l-4 1" stroke="#2a35c0" />
    </g>
    <g fontSize="6">
      <text x="34" y="490" fill="#4db84d">y</text>
      <text x="41" y="501" fill="#c23a3a">x</text>
      <text x="27" y="501" fill="#2a35c0">z</text>
    </g>
  </svg>
);

const leftTools = [["cone", 13, 1], ["prims", 13], ["ball", 13], [null, 7], ["arrow", 15], ["lock", 14, 1], ["rotate", 15], ["orbit", 15], ["scaleT", 15], ["pose", 15], ["axes", 15], [null, 6], ["magnetGrid", 14], ["magnetCurve", 15], ["magnetDot", 15], ["magnet", 15], [null, 6], ["rose", 14, 1], ["record", 15], ["bowl", 15]];

const rightTools = [["ground", 13, 1], ["greenMesh", 13], ["lock", 13], ["lamp", 14], ["moon", 13], ["bulb", 13, 1], ["lampY", 13], ["lampY", 13], [null, 3], ["rose", 12, 1], ["cycle", 13], ["snap", 13], [null, 2], ["dot", 14], ["check", 13], ["pen", 14], ["num", 13], ["spike", 14], ["spike", 13], ["angle", 14], ["expand", 13], ["tri", 14], ["disc", 13], ["abc", 14], ["image", 13, 1], [null, 7], ["bulb", 13, 1]];

const ToolColumn = ({ tools, w }) =>
  tools.map(([name, h, on], i) =>
    name ? (
      <IconButton key={i} $w={w} $h={h} $on={on} aria-label={name}>
        {name === "abc" ? "abc" : <Icon name={name} size={w > 12 ? 10 : 8} />}
      </IconButton>
    ) : (
      <Spacer key={i} $w={h} />
    )
  );

const vectors = [["Translate", "0", "tripod"], ["Rotate", "0", "torus"], ["Scale", "1", "target"], ["Pivot Translate", "0", "metaball"], ["Pivot Rotate", "0", "metaball"]];

const checks = ["Keep Position When Parenting", "Child Compensation", "Enable Constraints"];

const menuRows = [
  ["Flags", "sub"], ["Actions", "sub"], ["Dive into Network", "I or Enter"], null,
  ["Parameters and Channels", "sub"], ["Preview Window..."], ["Show Node Information..."], ["View Dependencies..."], ["Edit Comment..."], ["Save", "sub"], null,
  ["Help..."], null,
  ["Create Digital Asset..."], null,
  ["Show in Asset Manager..."], ["Type Properties..."],
];

const netIcons = ["tools", "list", "sheet", null, "palette", "table", null, "picture", "note", "photo", "chest", null, "search"];

const ticks = Array.from({ length: 40 }, (_, i) => (i === 0 ? 1 : i * 6));

export default function App() {
  const [checked, setChecked] = useState({});

  return (
    <Page>
      <GlobalStyle />
      <TitleBar>
        <Icon name="logo" />
        <span>untitled.hip - Houdini Indie Limited-Commercial 17.0.352</span>
        <Spacer />
        <IconButton $w={20} aria-label="Minimize"><Icon name="min" size={6} /></IconButton>
        <IconButton $w={20} aria-label="Maximize"><Icon name="max" size={6} /></IconButton>
        <IconButton $w={14} aria-label="Close"><Icon name="close" size={6} /></IconButton>
      </TitleBar>

      <MenuBar>
        {["File", "Edit", "Render", "Assets", "Windows", "Help"].map((m) => (
          <MenuItem key={m}>{m}</MenuItem>
        ))}
        <Spacer $w={8} />
        <Chooser $w={67}>
          <Icon name="layout" />
          <ChooserSelect aria-label="Desktop"><option>Build</option></ChooserSelect>
          <Icon name="updown" size={6} />
        </Chooser>
        <Spacer $w={5} />
        <Chooser $w={67}>
          <Icon name="cross" />
          <ChooserSelect aria-label="Radial menu"><option>Main</option></ChooserSelect>
          <Icon name="updown" size={6} />
        </Chooser>
        <Spacer />
        <Chooser $w={88}>
          <Icon name="clap" size={9} />
          <ChooserSelect aria-label="Take"><option>Main</option></ChooserSelect>
          <Icon name="updown" size={6} />
        </Chooser>
        <Spacer $w={11} />
      </MenuBar>

      <Shelves>
        <ShelfSet shelf={leftShelf} grow={479} />
        <ShelfSet shelf={rightShelf} grow={539} />
      </Shelves>

      <Desktop>
        <Pane>
          <Tabs tabs={[["Scene View", 43], ["Animation Editor", 58], ["Render View", 46], ["Composite View", 55], ["Motion FX View", 54], ["Geometry Spreadsheet", 70]]} />
          <Path>
            <IconButton aria-label="Link"><Icon name="target" size={9} /></IconButton>
            <Spacer $w={5} />
            <IconButton aria-label="Primitives"><Icon name="cubes" size={9} /></IconButton>
            <IconButton aria-label="Objects"><Icon name="shapes" size={9} /></IconButton>
            <IconButton aria-label="Layout"><Icon name="white" size={9} /></IconButton>
          </Path>
          <ToolStrip>
            <Row $gap={4}><Icon name="view" size={10} /><Strong>View</Strong></Row>
            <Spacer />
            <Row $gap={8}>
              <Icon name="selectTool" size={10} />
              <Icon name="moveTool" size={10} />
              <Icon name="snapTool" size={10} />
            </Row>
            <Spacer />
            <IconButton aria-label="Display tree"><Icon name="tree" /></IconButton>
            <IconButton aria-label="Help"><Icon name="help" size={9} /></IconButton>
          </ToolStrip>
          <ViewBody>
            <SideBar $w={18} $top={9}>
              <ToolColumn tools={leftTools} w={13} />
              <Spacer />
              <IconButton $h={13} aria-label="Cloud"><Icon name="cloud" size={9} /></IconButton>
              <IconButton $h={13} aria-label="Knot"><Icon name="knot" size={10} /></IconButton>
            </SideBar>
            <Stage>
              <Scene />
              <StageControls>
                <Pill $round aria-label="Lock camera"><Icon name="lock" size={7} /></Pill>
                <Pill>Persp ▾</Pill>
                <Pill>No cam ▾</Pill>
              </StageControls>
              <StageMark>Indie Edition</StageMark>
            </Stage>
            <SideBar $w={13} $top={17}>
              <ToolColumn tools={rightTools} w={11} />
              <Spacer />
              <IconButton $h={12} aria-label="Visibility"><Icon name="eye" size={9} /></IconButton>
            </SideBar>
          </ViewBody>
        </Pane>

        <RightColumn>
          <Pane $flex="224">
            <Tabs italic tabs={[["geo1", 31], ["Take List", 41], ["Performance Monitor", 67]]} />
            <Path />
            <ToolStrip>
              <Icon name="geo" size={9} />
              <Strong>Geometry</Strong>
              <NameInput defaultValue="geo1" aria-label="Node name" />
              {["gear", "houdini", "search", "info"].map((n) => (
                <IconButton key={n} aria-label={n}><Icon name={n} size={9} /></IconButton>
              ))}
              <Spacer $w={3} />
            </ToolStrip>
            <Params>
              <ParamTabs>
                <ParamTab $active $w={38}>Transform</ParamTab>
                <ParamTab $w={27}>Render</ParamTab>
                <ParamTab $w={20}>Misc</ParamTab>
              </ParamTabs>
              <ParamRow>
                <ParamLabel>Transform Order</ParamLabel>
                <Row $gap={3}>
                  <Combo $w={67}>
                    <select aria-label="Transform Order"><option>Scale Rot Trans</option></select>
                    <Icon name="updown" size={7} />
                  </Combo>
                  <Combo $w={48}>
                    <select aria-label="Rotate Order"><option>Rx Ry Rz</option></select>
                    <Icon name="updown" size={7} />
                  </Combo>
                </Row>
              </ParamRow>
              {vectors.map(([name, value, icon]) => (
                <ParamRow key={name}>
                  <ParamLabel>{name}</ParamLabel>
                  <Vector>
                    {["x", "y", "z"].map((axis) => (
                      <NumberInput key={axis} defaultValue={value} aria-label={`${name} ${axis}`} />
                    ))}
                    <Row><Spacer $w={3} /><Icon name={icon} size={7} /></Row>
                  </Vector>
                </ParamRow>
              ))}
              <ParamRow>
                <ParamLabel as="label" htmlFor="scale">Uniform Scale</ParamLabel>
                <Row>
                  <NumberInput id="scale" $w={63} defaultValue="1" />
                  <ScaleSlider type="range" min="0" max="1" step="0.1" defaultValue="1" aria-label="Uniform Scale slider" />
                </Row>
              </ParamRow>
              <ParamRow>
                <span />
                <Combo $w={102}>
                  <select aria-label="Modify Pre-Transform"><option>Modify Pre-Transform</option></select>
                  <Icon name="down" size={6} />
                </Combo>
              </ParamRow>
              {checks.map((name) => (
                <ParamRow key={name} $h={11}>
                  <span />
                  <CheckLabel>
                    <input
                      type="checkbox"
                      checked={!!checked[name]}
                      onChange={(e) => setChecked({ ...checked, [name]: e.target.checked })}
                    />
                    {name}
                  </CheckLabel>
                </ParamRow>
              ))}
            </Params>
          </Pane>
          <Splitter><Icon name="plus" size={3} /><Icon name="grip" size={4} /><Icon name="plus" size={3} /></Splitter>
          <Pane $flex="223">
            <Tabs italic tabs={[["/obj", 29], ["Tree View", 41], ["Material Palette", 55], ["Asset Browser", 51]]} />
            <Path />
            <ToolStrip $h={14} $bg="#363636">
              <Spacer $w={6} />
              {["Add", "Edit", "Go", "View", "Tools", "Layout", "Help"].map((m) => (
                <MenuItem key={m} $gap={6}>{m}</MenuItem>
              ))}
              <Spacer />
              {netIcons.map((n, i) =>
                n ? (
                  <IconButton key={n} aria-label={n}><Icon name={n} /></IconButton>
                ) : (
                  <Spacer key={i} $w={9} />
                )
              )}
              <Spacer $w={2} />
            </ToolStrip>
            <Network>
              <Watermark>Indie Edition</Watermark>
              <ContextName>Object</ContextName>
              <NodeDrawing width="60" height="70" viewBox="644 347 60 70">
                <rect x="662" y="395" width="42" height="16" rx="3" fill="#c4c4c4" />
                <rect x="659" y="390" width="50" height="18" rx="3" fill="#e3e0e0" stroke="#b08d60" />
                <path d="M660 393q0-2 2-2h6l-2 16h-4q-2 0-2-2z" fill="#96e01e" />
                <circle cx="688" cy="386" r="2.500" fill="#c4c4c4" />
                <circle cx="688" cy="412" r="2.500" fill="#c4c4c4" />
                <path d="M681 395q3-2 6 0v8q-3 2-6 0z" fill="#5886ab" />
                <circle cx="692" cy="399" r="3" fill="#c33e2c" />
                <path d="M688 397l4 7h-8z" fill="#f0cd52" />
                <path d="M686 354Q677 369 674 385M669 380l5 5 7-3" fill="none" stroke="#cf1f1f" strokeWidth="1.200" />
              </NodeDrawing>
              <Menu role="menu">
                {menuRows.map((row, i) =>
                  row ? (
                    <MenuRow key={row[0]} role="menuitem" $hot={row[0].startsWith("Create")}>
                      {row[0]}
                      {row[1] === "sub" ? <Icon name="right" size={6} /> : row[1] && <i>{row[1]}</i>}
                    </MenuRow>
                  ) : (
                    <MenuRule key={i} />
                  )
                )}
              </Menu>
              <HandArrow width="56" height="40" viewBox="796 492 56 40">
                <path d="M846 498Q844 508 830 514T801 521M801 521l10-5-1 8q-6 0-10-3" fill="none" stroke="#cf1f1f" strokeWidth="1.300" />
              </HandArrow>
            </Network>
          </Pane>
        </RightColumn>
      </Desktop>

      <PlayBar>
        <PlayColumn $w={120}>
          <Row>
            {["first", "prev", "stop", "play", "last"].map((n) => (
              <PlayButton key={n} $on={n === "stop"} $w={15} aria-label={n}><Icon name={n} size={9} /></PlayButton>
            ))}
            <FrameInput $w={25} $h={15} defaultValue="1" aria-label="Current frame" />
            <Spacer $w={3} />
            <PlayButton $w={8} aria-label="Step back"><Icon name="stepBack" size={6} /></PlayButton>
            <PlayButton $w={8} aria-label="Step forward"><Icon name="stepFwd" size={6} /></PlayButton>
          </Row>
          <Row>
            {["keySet", "sound", "loop", "clock"].map((n) => (
              <PlayButton key={n} $h={14} aria-label={n}><Icon name={n} size={10} /></PlayButton>
            ))}
            <Spacer $w={4} />
            {["dimPrev", "dimNext"].map((n) => (
              <IconButton key={n} aria-label={n}><Icon name={n} size={7} /></IconButton>
            ))}
          </Row>
        </PlayColumn>
        <PlayColumn>
          <Ruler>
            <FrameMarker>1</FrameMarker>
            {ticks.map((f, i) => (
              <Tick key={f} $frames={i === 0 ? 5 : 6} $major={f % 24 === 0}>
                <TickLabel>{f % 24 === 0 ? f : ""}</TickLabel>
              </Tick>
            ))}
            <Tick $frames={0} $major><TickLabel>2</TickLabel></Tick>
          </Ruler>
          <Row $gap={3}>
            <FrameInput $w={22} defaultValue="1" aria-label="Global start" />
            <FrameInput $w={22} defaultValue="1" aria-label="Range start" />
            <RangeTrack>
              <Icon name="play" size={6} />
              <span />
              <Icon name="prev" size={6} />
            </RangeTrack>
            <FrameInput $w={21} defaultValue="240" aria-label="Range end" />
            <FrameInput $w={21} defaultValue="240" aria-label="Global end" />
          </Row>
        </PlayColumn>
        <Spacer $w={4} />
        <Row>
          <RoundKey aria-label="Set key"><Icon name="key" size={9} /></RoundKey>
          <IconButton $w={8} aria-label="Key menu"><Icon name="down" size={5} /></IconButton>
        </Row>
        <Spacer $w={5} />
        <PlayColumn $w={90} $gap={3}>
          <Row $gap={4}><Icon name="scope" size={11} /><WideButton>0 keys, 0/0 channels</WideButton></Row>
          <Row $gap={4}><Icon name="wave" size={11} /><WideButton>Key All Channels</WideButton><Spacer $w={2} /></Row>
        </PlayColumn>
      </PlayBar>

      <StatusBar>
        <span>Spacebar for viewing and unrestricted scrubbing. Middle mouse drag on frame slider to hold scoped channel values.</span>
        <Spacer />
        <Row $gap={4}>
          <Icon name="chat" size={10} />
          <Icon name="refresh" size={9} />
          <WideButton $h={11} $pad={7}>Auto Update</WideButton>
        </Row>
      </StatusBar>
    </Page>
  );
}
